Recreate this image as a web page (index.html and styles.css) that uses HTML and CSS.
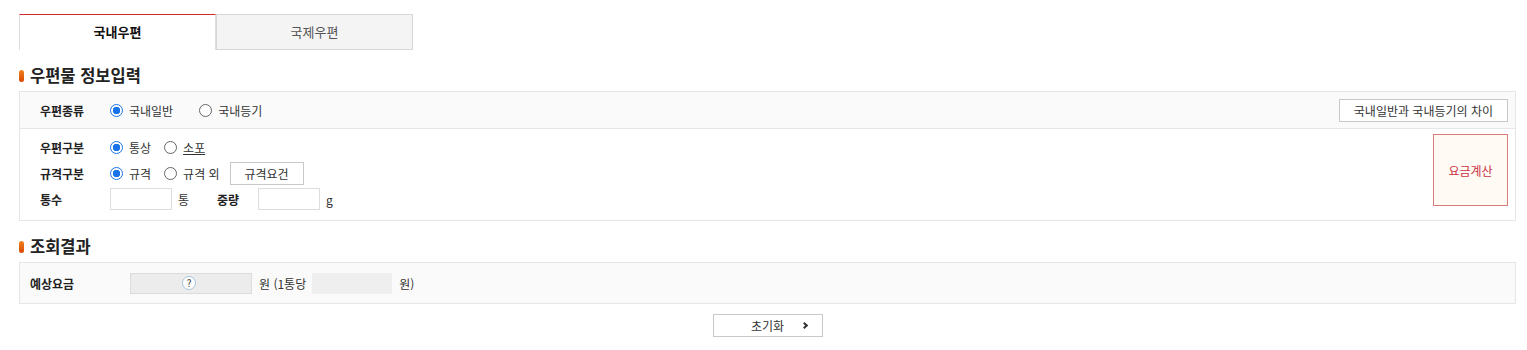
FILE: index.html
```html
<!DOCTYPE html>
<html lang="ko">
<head>
  <meta charset="UTF-8">
  <title>요금계산</title>
  <link rel="stylesheet" href="styles.css">
</head>
<body>
  <div class="wrap">
    <ul class="tabs">
      <li class="tab on">국내우편</li>
      <li class="tab">국제우편</li>
    </ul>

    <h3 class="tit">우편물 정보입력</h3>
    <div class="box">
      <div class="row row-kind">
        <span class="lbl">우편종류</span>
        <label class="rd"><span class="radio on"></span>국내일반</label>
        <label class="rd"><span class="radio"></span>국내등기</label>
        <button class="btn-diff">국내일반과 국내등기의 차이</button>
      </div>
      <div class="row row-form">
        <div class="fields">
          <div class="line">
            <span class="lbl">우편구분</span>
            <label class="rd"><span class="radio on"></span>통상</label>
            <label class="rd"><span class="radio"></span><u>소포</u></label>
          </div>
          <div class="line">
            <span class="lbl">규격구분</span>
            <label class="rd"><span class="radio on"></span>규격</label>
            <label class="rd"><span class="radio"></span>규격 외</label>
            <button class="btn-sm">규격요건</button>
          </div>
          <div class="line">
            <span class="lbl">통수</span>
            <input type="text" class="inp">
            <span class="unit">통</span>
            <span class="lbl lbl-w">중량</span>
            <input type="text" class="inp">
            <span class="unit">g</span>
          </div>
        </div>
        <button class="btn-calc">요금계산</button>
      </div>
    </div>

    <h3 class="tit">조회결과</h3>
    <div class="box result">
      <span class="lbl">예상요금</span>
      <span class="out out-total"><span class="qmark">?</span></span>
      <span class="unit">원 (1통당</span>
      <span class="out out-each"></span>
      <span class="unit">원)</span>
    </div>

    <div class="btns">
      <button class="btn-reset">초기화 <span class="arr"></span></button>
    </div>
  </div>
</body>
</html>
```

FILE: styles.css
```css
* {
  margin: 0;
  padding: 0;
  box-sizing: border-box;
}
body {
  font-family: "Noto Sans CJK KR", "Noto Sans", sans-serif;
  font-size: 12px;
  color: #333;
  background: #fff;
}
button, input {
  font-family: inherit;
  font-size: 12px;
  color: #333;
  background: #fff;
}
.wrap {
  padding: 14px 11px 0 19px;
}
.tabs {
  display: flex;
  list-style: none;
}
.tab {
  width: 197px;
  height: 36px;
  line-height: 33px;
  text-align: center;
  font-size: 13px;
  color: #555;
  background: #f4f4f4;
  border: 1px solid #d6d6d6;
}
.tab.on {
  background: #fff;
  border: 1px solid #ddd;
  border-top: 1px solid #d42a2a;
  border-bottom: none;
  color: #111;
  font-weight: bold;
}
.tit {
  display: flex;
  align-items: center;
  gap: 6px;
  margin: 15px 0 6px;
  font-size: 16.5px;
  color: #222;
  line-height: 20px;
}
.tit::before {
  content: "";
  width: 5px;
  height: 12px;
  border-radius: 3px;
  background: linear-gradient(#f08020, #d84800);
  margin-top: 2px;
}
.box {
  border: 1px solid #e6e6e6;
}
.row-kind {
  display: flex;
  align-items: center;
  height: 37px;
  padding: 0 7px 0 20px;
  background: #fafafa;
  border-bottom: 1px solid #e6e6e6;
}
.row-kind .rd {
  margin-right: 26px;
}
.lbl {
  display: inline-block;
  width: 70px;
  font-weight: bold;
  color: #222;
}
.rd {
  display: inline-flex;
  align-items: center;
  margin-right: 13px;
}
.radio {
  width: 13px;
  height: 13px;
  border: 1px solid #666;
  border-radius: 50%;
  margin-right: 6px;
  background: #fff;
}
.radio.on {
  border: 1px solid #1a73e8;
  background: radial-gradient(#1a73e8 3.5px, #fff 4px);
}
.btn-diff {
  margin-left: auto;
  height: 23px;
  padding: 0 14px;
  border: 1px solid #c8c8c8;
}
.row-form {
  display: flex;
  align-items: flex-start;
  height: 91px;
  padding: 5px 7px 0 20px;
}
.fields {
  flex: 1;
}
.line {
  display: flex;
  align-items: center;
  height: 26px;
}
.line + .line + .line {
  height: 24px;
  margin-top: 1px;
}
.btn-sm {
  width: 74px;
  height: 23px;
  border: 1px solid #c8c8c8;
  margin-left: -3px;
}
.inp {
  width: 62px;
  height: 22px;
  border: 1px solid #ddd;
}
.unit {
  margin-left: 6px;
  margin-right: 6px;
}
.lbl-w {
  width: 41px;
  margin-left: 22px;
}
.btn-calc {
  width: 75px;
  height: 72px;
  background: #fffaf4;
  border: 1px solid #d97b7b;
  color: #cc3344;
}
.result {
  display: flex;
  align-items: center;
  height: 42px;
  padding-left: 10px;
  background: #fafafa;
}
.result .lbl {
  width: 100px;
}
.out {
  display: flex;
  align-items: center;
  justify-content: center;
  height: 21px;
  background: #ececec;
}
.out-total {
  width: 122px;
  border: 1px solid #dcdcdc;
}
.out-each {
  width: 80px;
  margin-left: 6px;
  background: #efefef;
}
.qmark {
  width: 14px;
  height: 14px;
  margin-left: -4px;
  border-radius: 50%;
  border: 1px solid #a9c3e0;
  background: #fff;
  font-size: 10px;
  line-height: 12px;
  text-align: center;
}
.result .unit {
  margin: 0 0 0 7px;
}
.btns {
  display: flex;
  justify-content: center;
  margin-top: 10px;
}
.btn-reset {
  width: 110px;
  height: 23px;
  border: 1px solid #c8c8c8;
  position: relative;
}
.arr {
  position: absolute;
  right: 15px;
  top: 8px;
  width: 5px;
  height: 5px;
  border-top: 2px solid #333;
  border-right: 2px solid #333;
  transform: rotate(45deg);
}
```
